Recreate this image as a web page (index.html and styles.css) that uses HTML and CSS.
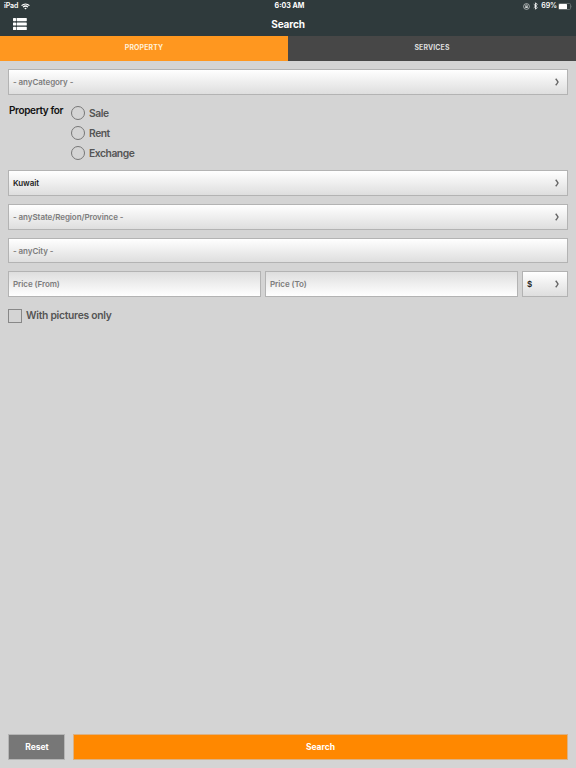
FILE: index.html
```html
<!DOCTYPE html>
<html lang="en">
<head>
  <meta charset="UTF-8">
  <title>Search</title>
  <link rel="stylesheet" href="styles.css">
</head>
<body>

  <header class="topbar">
    <div class="status">
      <div class="status-left">
        <span>iPad</span>
        <svg class="wifi" width="9" height="7" viewBox="0 0 16 12" fill="none" stroke="#fff" stroke-width="2.2">
          <path d="M1 4.5C5 .6 11 .6 15 4.5M3.6 7.2c2.5-2.4 6.3-2.4 8.8 0"/>
          <path d="M5.8 9.2c1.3-1.2 3.1-1.2 4.4 0L8 11.5z" fill="#fff" stroke="none"/>
        </svg>
      </div>
      <div class="status-time">6:03 AM</div>
      <div class="status-right">
        <svg class="lock" width="7" height="7" viewBox="0 0 14 14" fill="none" stroke="#d5d8d8" stroke-width="1.4">
          <circle cx="7" cy="7" r="5.8"/>
          <path d="M5.3 7V5.3a1.7 1.7 0 0 1 3.4 0V7"/>
          <rect x="4.5" y="6.5" width="5" height="3.5" fill="#d5d8d8" stroke="none"/>
        </svg>
        <svg class="bluetooth" width="5" height="8" viewBox="0 0 10 16" fill="none" stroke="#fff" stroke-width="1.7">
          <path d="M1.5 4.5l7 6.5L5 14.5v-13L8.5 5l-7 6.5"/>
        </svg>
        <span>69%</span>
        <svg class="battery" width="15" height="7" viewBox="0 0 15 7">
          <rect x=".5" y=".5" width="12" height="6" rx="1" fill="none" stroke="#778080" stroke-width=".7"/>
          <rect x="1" y="1" width="8" height="5" rx=".5" fill="#fff"/>
          <path d="M13.5 2.3q1 1.2 0 2.4z" fill="#778080"/>
        </svg>
      </div>
    </div>
    <div class="navbar">
      <svg class="menu" width="14" height="12" viewBox="0 0 14 12" fill="#fff">
        <rect width="3" height="3.2" rx=".6"/><rect x="3.6" width="10.2" height="3.2" rx=".6"/>
        <rect y="4.4" width="3" height="3.2" rx=".6"/><rect x="3.6" y="4.4" width="10.2" height="3.2" rx=".6"/>
        <rect y="8.8" width="3" height="3.2" rx=".6"/><rect x="3.6" y="8.8" width="10.2" height="3.2" rx=".6"/>
      </svg>
      <h1>Search</h1>
    </div>
  </header>

  <nav class="tabs">
    <a class="tab active">PROPERTY</a>
    <a class="tab">SERVICES</a>
  </nav>

  <form class="search-form">
    <div class="field category">
      <span>- anyCategory -</span>
      <svg class="arrow" width="4" height="8" viewBox="0 0 4 8"><path d="M.7.7Q2.1 2.2 3 4 2.1 5.8.7 7.3"/></svg>
    </div>

    <div class="purpose">
      <div class="purpose-label">Property for</div>
      <div class="radios">
        <label class="radio"><i class="circle"></i>Sale</label>
        <label class="radio"><i class="circle"></i>Rent</label>
        <label class="radio"><i class="circle"></i>Exchange</label>
      </div>
    </div>

    <div class="field selected">
      <span>Kuwait</span>
      <svg class="arrow" width="4" height="8" viewBox="0 0 4 8"><path d="M.7.7Q2.1 2.2 3 4 2.1 5.8.7 7.3"/></svg>
    </div>
    <div class="field">
      <span>- anyState/Region/Province -</span>
      <svg class="arrow" width="4" height="8" viewBox="0 0 4 8"><path d="M.7.7Q2.1 2.2 3 4 2.1 5.8.7 7.3"/></svg>
    </div>
    <div class="field city"><span>- anyCity -</span></div>

    <div class="prices">
      <div class="field input"><span>Price (From)</span></div>
      <div class="field input"><span>Price (To)</span></div>
      <div class="field selected currency">
        <span>$</span>
        <svg class="arrow" width="4" height="8" viewBox="0 0 4 8"><path d="M.7.7Q2.1 2.2 3 4 2.1 5.8.7 7.3"/></svg>
      </div>
    </div>

    <label class="check"><i class="box"></i>With pictures only</label>
  </form>

  <footer class="actions">
    <button class="btn reset" type="button">Reset</button>
    <button class="btn submit" type="button">Search</button>
  </footer>

</body>
</html>
```

FILE: styles.css
```css
* { box-sizing: border-box; }
body { margin: 0; height: 768px; display: flex; flex-direction: column; background: #d4d4d4; font-family: Inter, "Liberation Sans", sans-serif; overflow: hidden; }

.topbar { height: 36px; background: #2f3a3c; color: #fff; }
.status { height: 12px; display: grid; grid-template-columns: 1fr auto 1fr; align-items: center; padding: 0 3px 0 4px; font-size: 7px; line-height: 12px; font-weight: 600; }
.status-left { display: flex; align-items: center; gap: 3px; letter-spacing: -.1px; }
.status-time { font-weight: 700; font-size: 7.1px; padding-left: 2px; }
.status-right { display: flex; align-items: center; justify-content: flex-end; letter-spacing: -.1px; }
.bluetooth { margin: 0 3px 0 3px; }
.battery { margin-left: 1px; }
.navbar { height: 24px; display: grid; grid-template-columns: 1fr auto 1fr; align-items: center; }
.menu { margin-left: 13px; }
.navbar h1 { margin: 0; font-size: 10px; line-height: 24px; font-weight: 700; letter-spacing: -.15px; }

.tabs { height: 25px; display: flex; }
.tab { flex: 1; background: #474747; color: #ddd; font-size: 6.9px; line-height: 24px; font-weight: 700; letter-spacing: .15px; text-align: center; }
.tab.active { background: #ff971f; color: #fff1dc; }

.search-form { flex: 1; padding: 8px 8px 0; }
.field { height: 26px; display: flex; align-items: center; justify-content: space-between; padding: 0 8px 0 4px; margin-bottom: 8px; border: 1px solid #b3b3b3; background: linear-gradient(#fff, #dedede); color: #7c7c7c; font-size: 8px; font-weight: 600; letter-spacing: -.07px; }
.field.selected { color: #222; letter-spacing: -.1px; }
.field.city { height: 25px; }
.field.input { background: linear-gradient(#dedede, #fff); }
.field.category { margin-bottom: 9px; }
.arrow { fill: none; stroke: #666; stroke-width: 1.5; }

.purpose { display: flex; height: 66px; }
.purpose-label { width: 63px; padding-left: 1px; font-size: 10px; line-height: 13px; font-weight: 600; letter-spacing: -.36px; color: #111; white-space: nowrap; }
.radios { display: flex; flex-direction: column; gap: 6px; padding-top: 2px; }
.radio, .check { display: flex; align-items: center; font-size: 10.3px; line-height: 15px; font-weight: 600; letter-spacing: -.45px; color: #555; }
.radio { height: 14px; }
.circle { width: 14px; height: 14px; margin-right: 4px; border: 1px solid #777; border-radius: 50%; }

.prices { display: flex; gap: 4px; }
.prices .field { flex: 1; }
.prices .currency { flex: 0 0 46px; }
.check { margin-top: 3px; letter-spacing: -.27px; }
.box { width: 14px; height: 14px; margin-right: 4px; border: 1px solid #888; }

.actions { display: flex; gap: 8px; padding: 0 8px 8px; }
.btn { height: 26px; padding: 0; border: 1px solid #b5b5b5; font: 700 8.5px Inter, "Liberation Sans", sans-serif; color: #fff; }
.reset { width: 57px; padding-left: 1px; background: #777; }
.submit { flex: 1; background: #ff8800; border-color: #dbb285; }
```
